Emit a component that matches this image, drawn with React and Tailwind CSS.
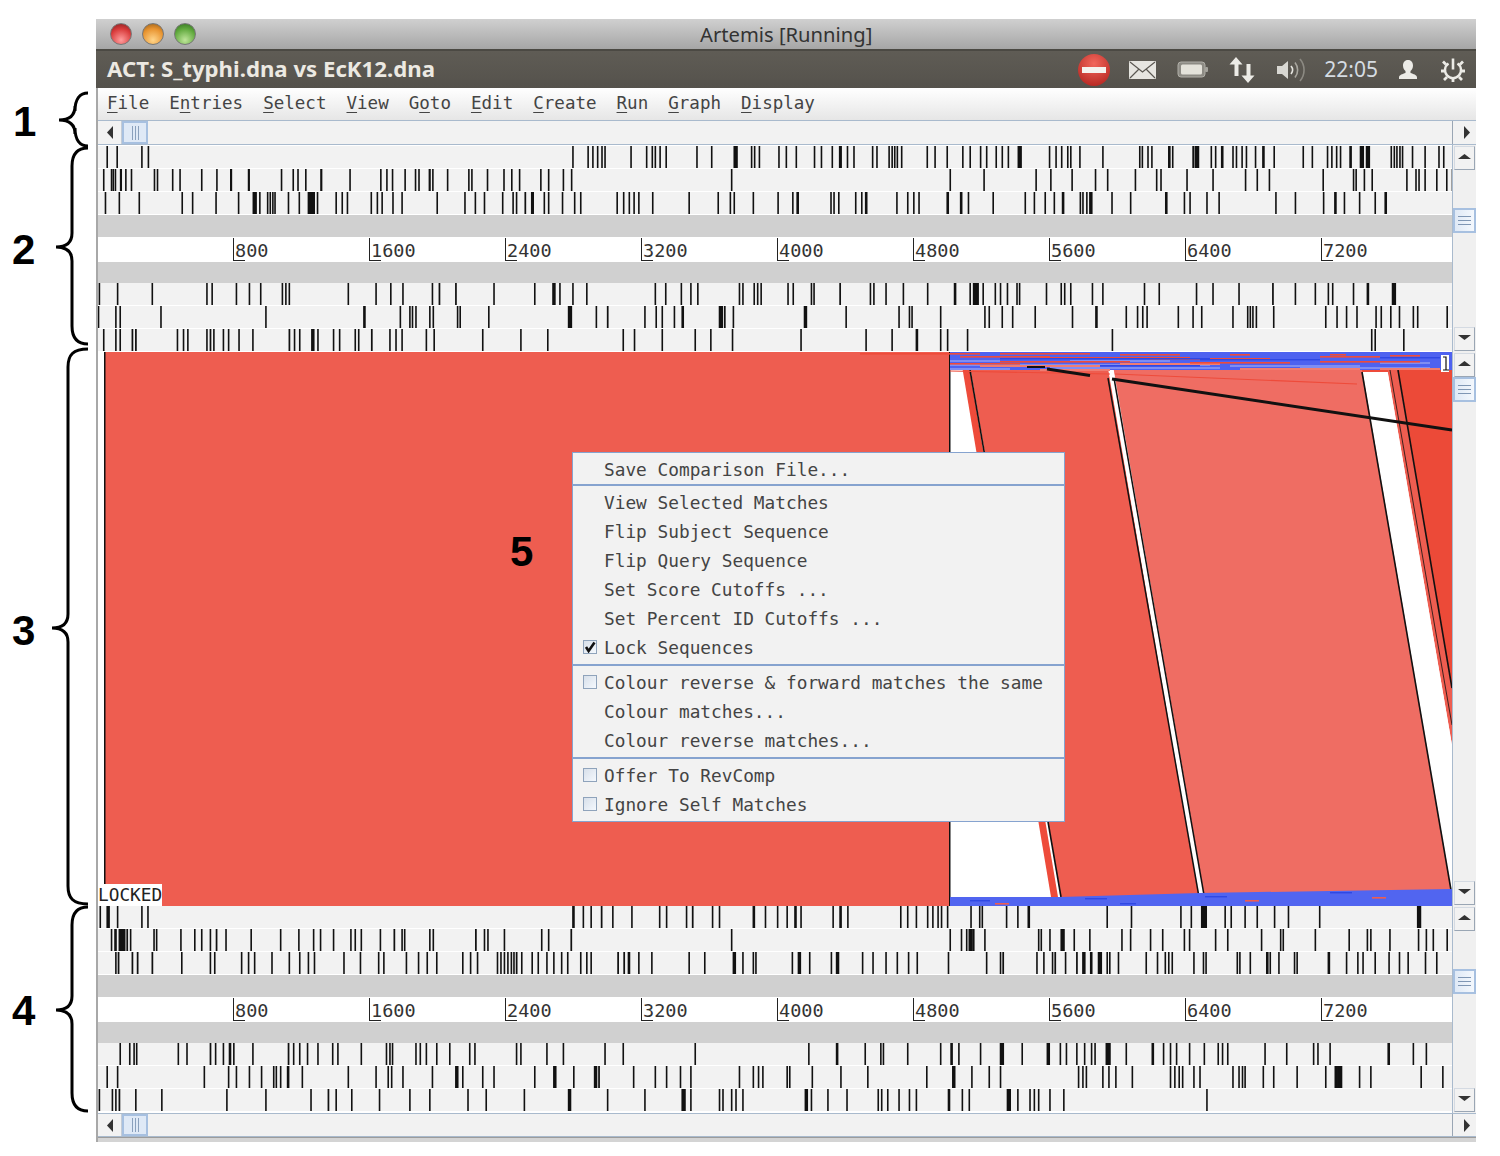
const mono = "font-['DejaVu_Sans_Mono',monospace]"

// bar positions read off the reference, in zoomed pixels: a number is a thin bar, [x, w] a thick one
const ZOOM_A = 2.306
const ZOOM_B = 1.153

const top1 = [
  [24,47,104,119,1098,1133,1144,1155,1165,[1172,3],1232,1268,1281,1288,1299,1313,1384,1418,[1470,10],1510,1517,1528],
  [5,22,45,87,103,128,[145,7],163,178,221,231,259,266,272,278,288,347,365,393,429,446,470,484,506,520,534,[557,10],629,644,657,671,678,699,752,837,843,856,865,[904,6],[913,3],[960,5],[966,10],1002,1012,[1026,6],1052,1060,1073,1083,1104,[1121,6],1147,1214,1235,1270,1280,1291,1300,[1322,6],[1346,10],[1360,10],1417,1424,1430,1437,1443,1466,1495,1527,1538],
]
const top2 = [
  [16,34,38,43,[55,5],67,80,133,140,175,192,242,277,[309,5],[350,5],426,453,464,482,[517,5],584,655,669,682,711,735,743,[767,5],775,809,858,865,901,939,957,975,1024,1042,1076,1095,1464],
  [400,478,598,632,681,735,763,827,876,886,946,1006,1081,1108,1136,1260,1330,1336,1355,1373,1453,1474,1481,1495,1522,1545,1558],
]
const top3 = [
  [20,52,98,197,221,275,327,[361,10],376,394,400,406,411,442,467,[488,17],509,552,566,578,633,647,658,683,704,785,849,873,894,936,960,968,[988,4],[1003,7],1032,1042,1074,1102,1116,1200,1215,1228,1239,1250,1282,1366,1433,1461,1470,1514],
  [3,[37,3],[47,6],125,132,143,182,196,[205,6],277,302,316,328,[393,6],[424,6],442,499,573,594,619,640,[659,6],700,706,715,[722,8],773,816,[897,6],940,953,992,1020,1151,1196,1261,[1287,6],1309,1344,1380,[1403,6]],
]
const top4 = [3,24,64,127,133,161,176,189,214,218,222,290,322,339,353,387,[395,2],[414,2],458,505,[526,4],534,549,565,644,656,674,685,693,741,745,758,762,766,797,803,824,827,[857,2],892,896,910,930,958,[989,3],1007,[1011,7],1022,1036,1042,1050,1061,1064,1095,1112,1116,1123,1148,1160,1208,1225,1268,1287,1317,[1356,2],1382,1405,1420,1425,1449,[1465,3],[1494,5]]
const top5 = [2,22,27,74,195,[308,3],350,361,364,368,384,388,416,419,452,[544,5],576,[589,2],632,645,652,666,[675,3],[718,5],[724,2],734,[816,4],864,925,937,940,973,1024,1029,1044,1056,1082,1125,[1152,3],1187,1200,1206,1211,1247,1264,1274,1310,1327,1330,1333,1337,1357,1417,1430,1441,1453,1475,1481,1492,1502,1518,1523,1557]
const top6 = [8,22,27,[41,2],[45,2],93,100,105,127,[131,2],135,146,152,164,180,[222,2],228,234,[248,4],255,273,280,298,302,[317,2],338,345,352,380,389,445,489,520,607,620,652,690,708,733,812,887,917,[945,3],973,981,1004,1171,1470,1474,1507]

const bot1 = [4,[12,4],24,52,59,[549,3],561,570,[582,2],595,617,649,657,680,[687,2],710,718,[757,3],771,785,796,[805,3],812,849,[857,3],866,927,935,945,958,964,970,974,981,1008,1018,1021,1049,1062,[1074,3],1165,1193,1250,1262,[1274,7],1301,1308,1324,1338,1358,1374,1410,[1523,5]]
const bot2 = [17,[21,3],[26,8],[35,2],39,66,69,97,113,121,131,[138,2],149,178,212,233,250,258,273,293,298,305,327,[343,2],352,355,384,388,[437,2],447,451,470,513,521,[547,2],732,984,997,1003,[1006,5],[1011,2],1024,1086,1089,1099,[1112,5],1127,1145,1182,1192,1215,1229,1254,1260,1290,1304,1343,1365,1368,1405,1444,1465,1469,1491,1524,1533,1541,1557]
const bot3 = [22,[25,2],[41,2],[47,2],[64,2],98,131,136,167,175,182,202,222,234,244,251,285,304,325,331,357,371,381,392,422,431,439,462,466,470,474,478,481,[484,2],490,502,509,519,527,536,543,558,565,570,[601,2],[608,2],[613,3],625,640,683,701,[734,4],745,757,760,802,[809,4],822,847,[853,4],883,895,910,923,936,946,982,1026,1042,[1045,2],1084,1092,1102,[1105,2],1117,[1130,2],[1137,4],[1146,3],[1155,5],1165,1168,1178,1210,1223,1232,1236,1240,1265,1276,1279,1315,1318,1330,[1349,3],1353,1363,1381,1384,[1420,3],1441,1454,1460,1474,1490,1502,1512,1532,1545]
const bot4 = [27,38,43,46,94,104,[131,2],137,146,[153,3],158,180,[221,2],227,234,243,255,272,278,305,334,338,341,368,373,380,392,407,430,436,484,489,519,538,586,607,690,821,[853,3],886,904,907,935,973,[985,3],994,1019,[1042,5],1067,[1096,4],1111,1118,1130,1139,1147,1151,[1164,6],1187,[1217,3],1230,1238,1245,1260,1277,1293,1298,1304,1347,1372,1403,1408,1422,[1489,3],1518,1533]
const bot5 = [12,24,124,152,161,176,190,204,207,212,[220,3],237,290,322,336,340,353,387,[414,4],422,445,458,505,[527,4],550,[574,4],[579,2],619,644,657,673,685,741,757,763,768,796,799,825,858,889,957,[987,4],1009,1029,1042,1132,1137,1141,1160,1167,1175,1194,1238,1243,1248,1252,1265,1272,1310,1317,1321,1324,1345,1357,1384,1417,[1428,4],[1432,5],1456,1469,1527,1552]
const bot6 = [3,18,22,[26,2],45,75,150,195,247,[267,2],276,294,326,361,384,428,449,493,[544,4],589,632,[675,5],685,718,722,732,737,745,[817,4],824,843,865,901,905,912,925,937,945,[982,3],998,1006,[1050,5],1062,1076,1081,1086,1099,1115,1280]

function Track({ bars, scale = ZOOM_B, more }) {
  const rect = (b, off, i) => {
    const [x, w] = Array.isArray(b) ? b : [b, 0]
    return <rect key={`${off}-${i}`} x={x / scale + off} y="0" width={Math.max(1.6, w / scale)} height="22" fill="#111" />
  }
  return (
    <svg width="1354" height="23" className="block shrink-0 bg-[#f2f2f2] border-b border-white">
      {bars.map((b, i) => rect(b, -2, i))}
      {more && more.map((b, i) => rect(b, 678, i))}
    </svg>
  )
}

function Ruler() {
  const ticks = [800, 1600, 2400, 3200, 4000, 4800, 5600, 6400, 7200]
  return (
    <div className="flex flex-col">
      <div className="h-[22px] bg-[#d0d0d0]" />
      <div className={`h-[25px] bg-white flex pl-[135px] items-center text-[18.5px] text-[#333] ${mono}`}>
        {ticks.map((t) => (
          <div key={t} className="w-[136px] shrink-0 flex items-center">
            <span className="block w-[12px] h-[23px] border-l border-b border-[#222]" />
            <span className="-ml-[10px] pt-[2px]">{t}</span>
          </div>
        ))}
      </div>
      <div className="h-[21px] bg-[#d0d0d0]" />
    </div>
  )
}

function Arrow({ dir }) {
  const points = {
    up: '3,10 16,10 9.5,5',
    down: '3,5 16,5 9.5,10',
    left: '13,3 13,16 7,9.5',
    right: '9,3 9,16 15,9.5',
  }
  return (
    <svg width="19" height="19" viewBox="0 0 19 19" className="block">
      <polygon points={points[dir]} fill="#333" />
    </svg>
  )
}

function ScrollButton({ dir }) {
  return (
    <div className="h-[24px] shrink-0 mx-[1px] flex items-center justify-center bg-[#f2f2f2] border border-[#d4dae2] border-b-[#9aa6b4] border-r-[#9aa6b4]">
      <Arrow dir={dir} />
    </div>
  )
}

function VScrollbar({ offset }) {
  return (
    <div className="w-[24px] shrink-0 bg-[#f0f0f0] border-l border-[#a9bacd] flex flex-col self-stretch py-[1px]">
      <ScrollButton dir="up" />
      <div className={offset} />
      <div className="h-[25px] shrink-0 bg-gradient-to-r from-[#dfe9f6] to-[#f4f8fd] border-2 border-[#a7c0e0] flex flex-col justify-center gap-[3px] px-[3px]">
        <span className="h-px bg-[#7f96b4]" />
        <span className="h-px bg-[#7f96b4]" />
        <span className="h-px bg-[#7f96b4]" />
      </div>
      <div className="flex-1" />
      <ScrollButton dir="down" />
    </div>
  )
}

function HScrollbar() {
  return (
    <div className="h-[24px] flex bg-[#f2f2f2] border-y border-[#a9bacd]">
      <div className="w-[24px] shrink-0 flex items-center justify-center border-r border-[#c4ccd6]">
        <Arrow dir="left" />
      </div>
      <div className="w-[26px] shrink-0 bg-[#dfe9f6] border-2 border-[#a7c0e0] flex items-center justify-center gap-[2px]">
        <span className="w-px h-[14px] bg-[#8aa0bc]" />
        <span className="w-px h-[14px] bg-[#8aa0bc]" />
        <span className="w-px h-[14px] bg-[#8aa0bc]" />
      </div>
      <div className="flex-1" />
      <div className="w-[24px] shrink-0 flex items-center justify-center border-l border-[#9aa6b4]">
        <Arrow dir="right" />
      </div>
    </div>
  )
}

function TrackGroup({ rows, scrollOffset, pad }) {
  return (
    <div className="flex h-[207px]">
      <div className={`flex-1 flex flex-col min-w-0 ${pad}`}>
        {rows.slice(0, 3)}
        <Ruler />
        {rows.slice(3)}
      </div>
      <VScrollbar offset={scrollOffset} />
    </div>
  )
}

// comparison view, coordinates are relative to x=96, y=352 of the page
function Comparison() {
  const streaksTop = [
    [1000, 353, 90], [860, 353, 120], [1120, 354, 60], [1230, 354, 20], [1330, 354, 16],
    [960, 356, 90], [1040, 357, 150], [1150, 358, 120], [1320, 356, 60], [1390, 355, 30],
    [1000, 361, 130], [1190, 362, 100], [1320, 361, 100], [950, 363, 70],
  ]
  const paleTop = [
    [950, 360, 50], [1070, 360, 100], [950, 364, 260], [1230, 365, 130], [1380, 362, 50], [1050, 367, 170], [1300, 367, 130], [950, 368, 60],
  ]
  const salmonTop = [[980, 365, 120], [1120, 363, 100], [1040, 369, 70], [1240, 368, 120], [1380, 368, 60]]
  const darkTop = [[1000, 358, 210], [1200, 359, 120], [1380, 357, 60], [1100, 365, 100]]
  const darkBottom = [[970, 900, 20], [1085, 898, 22], [1205, 896, 22], [1330, 892, 22], [1120, 903, 16]]
  const redBottom = [[995, 903, 14], [1245, 900, 14], [1372, 897, 14]]
  const s = (x) => x - 96
  const t = (y) => y - 352
  const poly = (pts) => pts.map(([x, y]) => `${s(x)},${t(y)}`).join(' ')
  return (
    <svg width="1354" height="554" viewBox="2 0 1354 554" className="block">
      <rect x="0" y="0" width="1356" height="554" fill="#ffffff" />
      <rect x={s(105)} y="0" width={949 - 105} height="554" fill="#ee5d50" />
      <rect x={s(104)} y="0" width="1.5" height="554" fill="#111" />
      <rect x={s(949)} y="0" width="1.5" height="554" fill="#111" />
      <polygon points={poly([[970, 366], [1108, 366], [1199, 897], [1061, 897]])} fill="#ee5d50" />
      <polygon points={poly([[1113, 366], [1362, 366], [1452, 893], [1204, 895]])} fill="#ef6d63" />
      <polygon points={poly([[962, 366], [969, 366], [1058, 897], [1051, 897]])} fill="#ee4b3a" />
      <polygon points={poly([[1387, 368], [1452, 368], [1452, 745]])} fill="#ee5d50" />
      <polygon points={poly([[1398, 368], [1452, 368], [1452, 688]])} fill="#ec4a38" />
      <polygon points={poly([[1362, 368], [1387, 368], [1452, 745], [1452, 893]])} fill="#ffffff" />
      <polyline points={poly([[970, 370], [1061, 897]])} stroke="#111" strokeWidth="1.6" fill="none" />
      <polygon points={poly([[1108, 368], [1113, 368], [1204, 895], [1199, 897]])} fill="#ffffff" />
      <polyline points={poly([[1108, 378], [1199, 897]])} stroke="#111" strokeWidth="1.5" fill="none" />
      <polyline points={poly([[1114, 378], [1204, 895]])} stroke="#111" strokeWidth="1.5" fill="none" />
      <polyline points={poly([[1362, 372], [1451, 890]])} stroke="#111" strokeWidth="1.6" fill="none" />
      <polyline points={poly([[1398, 370], [1452, 688]])} stroke="#111" strokeWidth="1.6" fill="none" />
      <polyline points={poly([[1390, 370], [1452, 725]])} stroke="#111" strokeWidth="0.8" fill="none" />
      <polyline points={poly([[1115, 374], [1357, 384]])} stroke="#ee4b3a" strokeWidth="1.2" fill="none" />
      <polyline points={poly([[950, 371], [1110, 374]])} stroke="#ee4b3a" strokeWidth="1.2" fill="none" />
      <rect x={s(1362)} y={t(370)} width="26" height="2" fill="#ee4b3a" />
      <rect x={s(950)} y={t(352)} width="491" height="18" fill="#4e62f0" />
      <rect x={s(1441)} y={t(352)} width="11" height="18" fill="#4e62f0" />
      {paleTop.map(([x, y, w]) => (
        <rect key={`p${x}-${y}`} x={s(x)} y={t(y)} width={w} height="2" fill="#7f8df2" />
      ))}
      {salmonTop.map(([x, y, w]) => (
        <rect key={`m${x}-${y}`} x={s(x)} y={t(y)} width={w} height="2" fill="#ef7d72" />
      ))}
      {streaksTop.map(([x, y, w]) => (
        <rect key={`r${x}-${y}`} x={s(x)} y={t(y)} width={w} height="1.6" fill="#ee4b3a" />
      ))}
      {darkTop.map(([x, y, w]) => (
        <rect key={`d${x}-${y}`} x={s(x)} y={t(y)} width={w} height="1.4" fill="#2f48e4" />
      ))}
      <polygon points={poly([[1027, 366], [1045, 366], [1045, 368], [1027, 368]])} fill="#111" />
      <polyline points={poly([[1047, 369], [1090, 375.5]])} stroke="#111" strokeWidth="3" fill="none" />
      <polyline points={poly([[1112, 379], [1452, 430]])} stroke="#111" strokeWidth="3" fill="none" />
      <polygon points={poly([[950, 897], [1060, 897], [1200, 893], [1452, 889], [1452, 906], [950, 906]])} fill="#5165f0" />
      {darkBottom.map(([x, y, w]) => (
        <rect key={`b${x}-${y}`} x={s(x)} y={t(y)} width={w} height="1.4" fill="#2f48e4" />
      ))}
      {redBottom.map(([x, y, w]) => (
        <rect key={`e${x}-${y}`} x={s(x)} y={t(y)} width={w} height="1.6" fill="#ee5d50" />
      ))}
      <rect x={s(1441)} y={t(355)} width="8" height="17" fill="#ffffff" />
      <path d={`M${s(1443)} ${t(357)}h3v13h-3m3 0h3`} stroke="#111" strokeWidth="1.2" fill="none" />
    </svg>
  )
}

function MenuItem({ label, check }) {
  return (
    <div className="h-[29px] flex items-center pl-[10px] relative">
      <span className="w-[21px] shrink-0 flex items-center -mt-[3px]">
        {check !== undefined && (
          <span className="w-[14px] h-[14px] bg-gradient-to-br from-[#d8e0ea] to-[#f4f8fd] border border-[#8fa3bb] flex items-center justify-center">
            {check && (
              <svg width="12" height="12" viewBox="0 0 12 12" className="block">
                <path d="M2 6l2.600 4L10.500 1.500" stroke="#111" strokeWidth="2.600" fill="none" />
              </svg>
            )}
          </span>
        )}
      </span>
      <span className="whitespace-pre">{label}</span>
    </div>
  )
}

function PopupMenu() {
  return (
    <div className={`absolute left-[474px] top-[100px] w-[493px] h-[370px] bg-[#f2f2f2] border border-[#86a3cf] flex flex-col text-[17.8px] text-[#444] ${mono}`}>
      <div className="h-[33px] flex items-center pl-[31px] pt-[3px] shrink-0 border-b-2 border-[#86a3cf]">Save Comparison File...</div>
      <div className="pt-[3px] pb-[1px] border-b-2 border-[#86a3cf]">
        <MenuItem label="View Selected Matches" />
        <MenuItem label="Flip Subject Sequence" />
        <MenuItem label="Flip Query Sequence" />
        <MenuItem label="Set Score Cutoffs ..." />
        <MenuItem label="Set Percent ID Cutoffs ..." />
        <MenuItem label="Lock Sequences" check={true} />
      </div>
      <div className="pt-[3px] pb-[1px] border-b-2 border-[#86a3cf]">
        <MenuItem label="Colour reverse & forward matches the same" check={false} />
        <MenuItem label="Colour matches..." />
        <MenuItem label="Colour reverse matches..." />
      </div>
      <div className="pt-[3px]">
        <MenuItem label="Offer To RevComp" check={false} />
        <MenuItem label="Ignore Self Matches" check={false} />
      </div>
    </div>
  )
}

function MenuBar() {
  const items = [
    ['', 'F', 'ile'], ['E', 'n', 'tries'], ['', 'S', 'elect'], ['', 'V', 'iew'], ['G', 'o', 'to'],
    ['', 'E', 'dit'], ['', 'C', 'reate'], ['', 'R', 'un'], ['', 'G', 'raph'], ['', 'D', 'isplay'],
  ]
  return (
    <div className={`h-[32px] shrink-0 bg-gradient-to-b from-white to-[#e6e6e6] flex items-center pl-[9px] gap-[20px] text-[17.55px] text-[#444] ${mono}`}>
      {items.map(([a, b, c]) => (
        <span key={a + b + c} className="leading-none">
          {a}
          <u className="underline-offset-[3px]">{b}</u>
          {c}
        </span>
      ))}
    </div>
  )
}

function TrayIcons() {
  return (
    <div className="flex items-center text-[#d8d8d2] ml-auto pr-[10px]">
      <svg width="34" height="34" viewBox="0 0 34 34" className="block mr-[17px]">
        <defs>
          <radialGradient id="stop" cx="50%" cy="30%" r="70%">
            <stop offset="0%" stopColor="#f2675c" />
            <stop offset="100%" stopColor="#b92a24" />
          </radialGradient>
        </defs>
        <circle cx="17" cy="17" r="16" fill="url(#stop)" />
        <rect x="5" y="14" width="24" height="6" fill="#f4f2ee" />
      </svg>
      <svg width="30" height="22" viewBox="0 0 30 22" className="block mr-[19px]">
        <rect x="1" y="2" width="27" height="18" rx="1" fill="#e6e5e0" />
        <path d="M2 3l12.500 10L27 3M2 19l9-9M27 19l-9-9" stroke="#5a5751" strokeWidth="1.2" fill="none" />
      </svg>
      <svg width="32" height="20" viewBox="0 0 32 20" className="block mr-[19px]">
        <rect x="1" y="2" width="27" height="15" rx="3" fill="#8d8b84" stroke="#b0aea7" />
        <rect x="4" y="4.500" width="21" height="10" rx="1.500" fill="#e4e2da" />
        <rect x="28" y="7" width="3" height="5" rx="1" fill="#a5a39c" />
      </svg>
      <svg width="28" height="30" viewBox="0 0 28 30" className="block mr-[19px]">
        <path d="M8 2l6.500 7.500H10.500V21h-4V9.500H1.500z" fill="#ecebe6" />
        <path d="M20 28l6.500-7.500H22.500V9h-4v11.500h-5z" fill="#ecebe6" />
      </svg>
      <svg width="32" height="26" viewBox="0 0 32 26" className="block mr-[17px]">
        <path d="M2 9h5l6-5v18l-6-5H2z" fill="#d8d7d2" />
        <path d="M16 9a6 6 0 0 1 0 8" stroke="#e4e3de" strokeWidth="1.8" fill="none" />
        <path d="M20 5.500a12 12 0 0 1 0 15" stroke="#a8a69f" strokeWidth="1.6" fill="none" />
        <path d="M25 2a17 17 0 0 1 0 22" stroke="#8c8a83" strokeWidth="1.6" fill="none" />
      </svg>
      <span className="font-['Noto_Sans',sans-serif] text-[21px] leading-none mr-[20px] text-[#d5dce2]">22:05</span>
      <svg width="20" height="22" viewBox="0 0 20 22" className="block mr-[22px]">
        <path d="M10 1c3.400 0 5 2.600 5 5.500 0 2.400-1 4.500-2.500 5.600v1.900c2.800 1 6.500 1.800 6.500 4.500V20H1v-1.500c0-2.700 3.700-3.500 6.500-4.500v-1.900C6 11 5 8.900 5 6.500 5 3.600 6.600 1 10 1z" fill="#ecebe6" />
      </svg>
      <svg width="26" height="26" viewBox="0 0 26 26" className="block">
        <path d="M13 1.500v11" stroke="#ecebe6" strokeWidth="2.600" fill="none" />
        <path d="M8.500 6.500a8 8 0 1 0 9 0" stroke="#ecebe6" strokeWidth="2.400" fill="none" />
        <path d="M3 4.500l3 3M23 4.500l-3 3M1 14h3M22 14h3M4 23l3-3M22 23l-3-3M13 22v3" stroke="#ecebe6" strokeWidth="2.800" fill="none" />
      </svg>
    </div>
  )
}

function Brace({ y1, y2, tip, spine = 72, end = 88 }) {
  const path = `M${end} ${y1}C${spine + 5} ${y1} ${spine} ${y1 + 6} ${spine} ${y1 + 18}L${spine} ${tip - 14}C${spine} ${tip - 4} ${spine - 6} ${tip} ${spine - 16} ${tip}C${spine - 6} ${tip} ${spine} ${tip + 4} ${spine} ${tip + 14}L${spine} ${y2 - 18}C${spine} ${y2 - 6} ${spine + 5} ${y2} ${end} ${y2}`
  return <path d={path} stroke="#000" strokeWidth="3" fill="none" />
}

function Annotations() {
  const digit = "absolute font-['Liberation_Sans',sans-serif] font-bold text-[42px] leading-none text-black"
  return (
    <div className="w-[96px] shrink-0 relative">
      <svg width="96" height="1156" viewBox="0 0 96 1156" className="block">
        <Brace y1={93} y2={146} tip={120} spine={75} />
        <Brace y1={148} y2={344} tip={247} />
        <Brace y1={349} y2={904} tip={628} spine={68} />
        <Brace y1={907} y2={1111} tip={1010} />
      </svg>
      <span className={`${digit} left-[13px] top-[101px]`}>1</span>
      <span className={`${digit} left-[12px] top-[229px]`}>2</span>
      <span className={`${digit} left-[12px] top-[610px]`}>3</span>
      <span className={`${digit} left-[12px] top-[990px]`}>4</span>
    </div>
  )
}

export default function App() {
  const dots = [
    'bg-[radial-gradient(circle_at_50%_80%,#ff9d9d,#d83a3a_60%,#7d1f1f)]',
    'bg-[radial-gradient(circle_at_50%_80%,#ffd58a,#e8932f_60%,#8f5a18)]',
    'bg-[radial-gradient(circle_at_50%_80%,#bfe59a,#5fa83c_60%,#2f6a1f)]',
  ]
  return (
    <div className="w-[1500px] h-[1156px] bg-white flex overflow-hidden">
      <Annotations />
      <div className="w-[1380px] pt-[19px] flex flex-col h-[1142px]">
        <div className="h-[32px] shrink-0 bg-gradient-to-b from-[#d0d0d0] to-[#a6a6a6] border-b-2 border-[#4b4943] flex items-center pl-[14px] gap-[10px] relative">
          {dots.map((d) => (
            <span key={d} className={`w-[22px] h-[22px] rounded-full border border-[#777] ${d}`} />
          ))}
          <span className="absolute left-[604px] top-[3px] font-['Noto_Sans',sans-serif] text-[20.2px] text-[#333] leading-[24px]">Artemis [Running]</span>
        </div>
        <div className="h-[37px] shrink-0 bg-gradient-to-b from-[#5f5c55] to-[#55524c] flex items-center pl-[11px]">
          <span className="font-['Noto_Sans',sans-serif] font-bold text-[22.2px] text-[#ece9e2] -mt-[2px]">ACT: S_typhi.dna vs EcK12.dna</span>
          <TrayIcons />
        </div>
        <div className="flex-1 flex flex-col border-l-2 border-[#a8a8a8] min-h-0">
          <MenuBar />
          <div className="h-[25px] shrink-0 [&>div]:h-[25px]">
            <HScrollbar />
          </div>
          <TrackGroup
            pad="pt-[1px]"
            scrollOffset="h-[38px] shrink-0"
            rows={[
              <Track key="t1" scale={ZOOM_A} bars={top1[0]} more={top1[1]} />,
              <Track key="t2" scale={ZOOM_A} bars={top2[0]} more={top2[1]} />,
              <Track key="t3" scale={ZOOM_A} bars={top3[0]} more={top3[1]} />,
              <Track key="t4" bars={top4} />,
              <Track key="t5" bars={top5} />,
              <Track key="t6" bars={top6} />,
            ]}
          />
          <div className="flex h-[554px] relative">
            <div className="flex-1 min-w-0 relative">
              <Comparison />
              <span className={`absolute left-0 bottom-0 h-[22px] w-[64px] bg-white flex items-center whitespace-nowrap text-[17.8px] text-[#222] ${mono}`}>LOCKED</span>
              <PopupMenu />
              <span className="absolute left-[412px] top-[179px] font-['Liberation_Sans',sans-serif] font-bold text-[42px] leading-none text-black">5</span>
            </div>
            <VScrollbar offset="h-[0px] shrink-0" />
          </div>
          <TrackGroup
            pad=""
            scrollOffset="h-[38px] shrink-0"
            rows={[
              <Track key="b1" bars={bot1} />,
              <Track key="b2" bars={bot2} />,
              <Track key="b3" bars={bot3} />,
              <Track key="b4" bars={bot4} />,
              <Track key="b5" bars={bot5} />,
              <Track key="b6" bars={bot6} />,
            ]}
          />
          <HScrollbar />
          <div className="h-[5px] bg-[#d4d4d4] border-t border-[#9c9c9c]" />
        </div>
      </div>
    </div>
  )
}
